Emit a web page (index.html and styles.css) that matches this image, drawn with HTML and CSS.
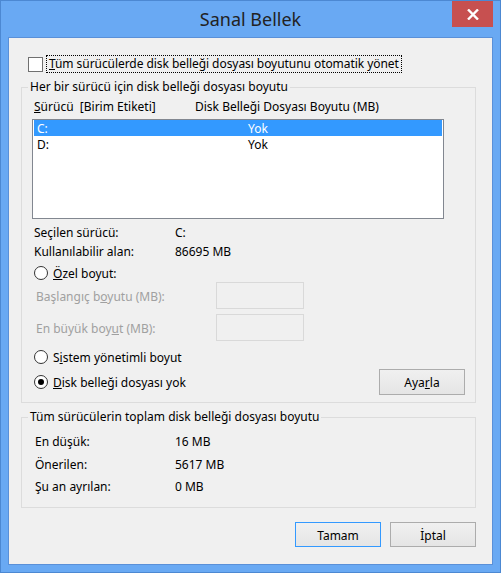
FILE: index.html
```html
<!DOCTYPE html>
<html lang="tr">
<head>
<meta charset="utf-8">
<title>Sanal Bellek</title>
<link rel="stylesheet" href="styles.css">
</head>
<body>
<div class="window">
  <div class="titlebar">
    <span class="tb-spacer"></span>
    <div class="title">Sanal Bellek</div>
    <div class="close">
      <svg width="12" height="11" viewBox="0 0 12 11"><path d="M1 0.5 L11 10.5 M11 0.5 L1 10.5" stroke="#fff" stroke-width="2.4" fill="none"/></svg>
    </div>
  </div>
  <div class="client">
    <div class="auto-row">
      <span class="checkbox"></span>
      <span class="focus-label"><u>T</u>üm sürücülerde disk belleği dosyası boyutunu otomatik yönet</span>
    </div>

    <fieldset class="group g1">
      <legend>Her bir sürücü için disk belleği dosyası boyutu</legend>
      <div class="g1-body">
        <div class="list-head"><span><u>S</u>ürücü&nbsp; [Birim Etiketi]</span><span>Disk Belleği Dosyası Boyutu (MB)</span></div>
        <div class="listbox">
          <div class="item selected"><span>C:</span><span>Yok</span></div>
          <div class="item"><span>D:</span><span>Yok</span></div>
        </div>
        <div class="kv kv-first"><span>Seçilen sürücü:</span><span>C:</span></div>
        <div class="kv kv-second"><span>Kullanılabilir alan:</span><span>86695 MB</span></div>
        <div class="radio-row r-ozel"><span class="radio"></span><span class="rlabel"><u>Ö</u>zel boyut:</span></div>
        <div class="field-row fr1"><span>Başlangıç b<u>o</u>yutu (MB):</span><span class="textbox"></span></div>
        <div class="field-row fr2"><span>En büyük boy<u>u</u>t (MB):</span><span class="textbox"></span></div>
        <div class="radio-row r-sistem"><span class="radio"></span><span class="rlabel">S<u>i</u>stem yönetimli boyut</span></div>
        <div class="last-row">
          <div class="radio-row"><span class="radio checked"></span><span class="rlabel"><u>D</u>isk belleği dosyası yok</span></div>
          <button class="btn">Aya<u>r</u>la</button>
        </div>
      </div>
    </fieldset>

    <fieldset class="group g2">
      <legend>Tüm sürücülerin toplam disk belleği dosyası boyutu</legend>
      <div class="g2-body">
        <div class="kv2 k1"><span>En düşük:</span><span>16 MB</span></div>
        <div class="kv2 k2"><span>Önerilen:</span><span>5617 MB</span></div>
        <div class="kv2 k3"><span>Şu an ayrılan:</span><span>0 MB</span></div>
      </div>
    </fieldset>

    <div class="buttons">
      <button class="btn default">Tamam</button>
      <button class="btn">İptal</button>
    </div>
  </div>
</div>
</body>
</html>
```
FILE: styles.css
```css
* { box-sizing: border-box; }
html, body { margin: 0; padding: 0; }
body {
  width: 501px;
  height: 573px;
  overflow: hidden;
  font-family: "Noto Sans", "Open Sans", sans-serif;
  font-size: 12px;
  color: #000;
}
u { text-decoration: underline; text-underline-offset: 1px; text-decoration-thickness: 1px; }

.window {
  width: 501px;
  height: 573px;
  background: #69a9f3;
  border: 1px solid #4c88d2;
  display: flex;
  flex-direction: column;
}
.titlebar {
  height: 36px;
  display: grid;
  grid-template-columns: 1fr auto 1fr;
  align-items: start;
}
.title {
  font-size: 18px;
  line-height: 36px;
  color: #222;
}
.close {
  justify-self: end;
  width: 41px;
  height: 26px;
  margin-right: 7px;
  background: #c75050;
  display: flex;
  align-items: center;
  justify-content: center;
}
.close svg { display: block; margin-top: 1px; }

.client {
  margin: 0 7px 0 7px;
  height: 528px;
  background: #f0f0f0;
  border: 1px solid #5a90d8;
  display: flex;
  flex-direction: column;
}

.auto-row {
  margin-top: 17px;
  height: 18px;
  display: flex;
  align-items: center;
  padding-left: 19px;
}
.checkbox {
  width: 15px;
  height: 15px;
  border: 1px solid #707070;
  background: #fff;
}
.focus-label {
  margin-left: 3px;
  height: 18px;
  line-height: 16px;
  padding: 1px 2px 0 2px;
  outline: 1px dotted #000;
  outline-offset: -1px;
  border: 1px solid transparent;
  border-top: 0;
  white-space: nowrap;
  letter-spacing: -0.06px;
}

.group {
  margin: 6px 0 0 12px;
  width: 455px;
  border: 1px solid #dcdcdc;
  padding: 0;
  min-width: 0;
}
.group legend {
  margin-left: 6px;
  padding: 0 2px;
  line-height: 16px;
  height: 16px;
}

.g1-body { padding: 3px 10px 7px 12px; }
.list-head {
  display: grid;
  grid-template-columns: 161px 1fr;
  line-height: 16px;
  height: 16px;
  padding-top: 1px;
  white-space: nowrap;
}
.listbox {
  margin-top: 5px;
  width: 412px;
  height: 100px;
  margin-left: -2px;
  border: 1px solid #828790;
  background: #fff;
  padding: 0 1px;
}
.item {
  display: grid;
  grid-template-columns: 211px 1fr;
  height: 16px;
  line-height: 16px;
  padding: 1px 0 0 3px;
}
.item.selected { background: #3399ff; color: #fff; }

.kv {
  display: grid;
  grid-template-columns: 141px 1fr;
  line-height: 16px;
  height: 16px;
  padding-top: 1px;
}
.kv-first { margin-top: 5px; }
.kv-second { margin-top: 3px; }

.radio-row {
  display: flex;
  align-items: center;
  height: 16px;
  line-height: 16px;
}
.rlabel { padding-top: 2px; }
.radio {
  width: 14px;
  height: 14px;
  border-radius: 50%;
  border: 1px solid #333;
  background: #fff;
  margin-right: 5px;
  display: flex;
  align-items: center;
  justify-content: center;
}
.radio.checked::after {
  content: "";
  width: 6px;
  height: 6px;
  border-radius: 50%;
  background: #000;
}
.r-ozel { margin-top: 6px; }
.r-sistem { margin-top: 8px; }

.field-row {
  display: grid;
  grid-template-columns: 180px 88px;
  align-items: center;
  padding-left: 2px;
  color: #a0a0a0;
  height: 27px;
  line-height: 16px;
}
.field-row span:first-child { padding-top: 3px; }
.fr1 { margin-top: 1px; }
.fr2 { margin-top: 5px; }
.textbox {
  height: 27px;
  border: 1px solid #d9d9d9;
  background: #f0f0f0;
}

.last-row {
  margin-top: 4px;
  display: flex;
  align-items: center;
  justify-content: space-between;
  height: 26px;
}

.btn {
  font: inherit;
  color: #000;
  width: 86px;
  height: 26px;
  border: 1px solid #acacac;
  background: linear-gradient(#f0f0f0, #e5e5e5);
  padding: 2px 0 0 0;
  line-height: 16px;
}
.btn.default { border-color: #3399ff; }

.g2 { margin-top: 6px; }
.g2-body { padding: 8px 10px 13px 13px; }
.kv2 {
  display: grid;
  grid-template-columns: 140px 1fr;
  line-height: 16px;
  height: 16px;
  padding-top: 1px;
}
.k2 { margin-top: 7px; }
.k3 { margin-top: 6px; }

.buttons {
  margin-top: 14px;
  display: flex;
  justify-content: flex-end;
  gap: 9px;
  padding-right: 16px;
}
.buttons .btn { height: 25px; }
```
